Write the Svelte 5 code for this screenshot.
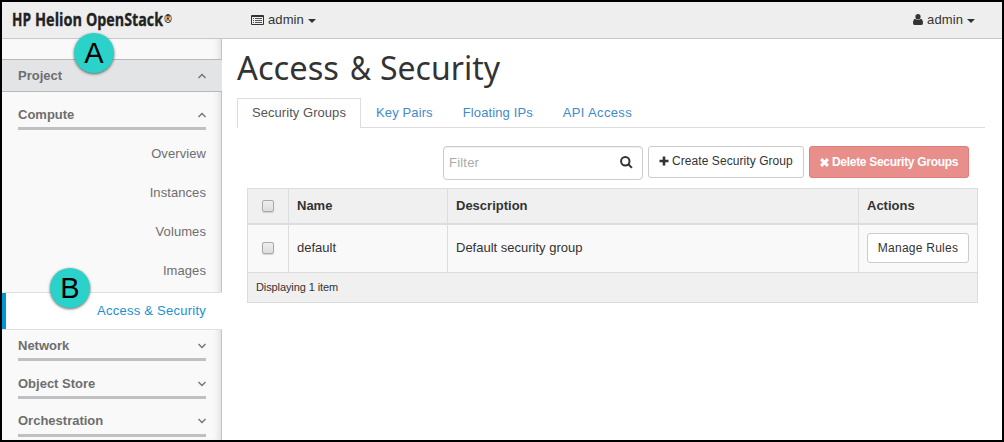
<script>
  const links = ['Overview', 'Instances', 'Volumes', 'Images'];
  const groups = ['Network', 'Object Store', 'Orchestration'];
  const tabs = ['Security Groups', 'Key Pairs', 'Floating IPs', 'API Access'];
</script>

{#snippet chevron(up)}
  <svg class="chev" width="8" height="6" viewBox="0 0 8 6"><path d={up ? 'M.5 5 4 1.5 7.5 5' : 'M.5 1 4 4.5 7.5 1'} fill="none" stroke="#707070" stroke-width="1.3" /></svg>
{/snippet}

<div class="frame">
  <header>
    <svg class="logo" width="166" height="30" viewBox="0 0 166 30"><text y="20"><tspan x="0" textLength="19" lengthAdjust="spacingAndGlyphs">HP</tspan><tspan x="23" textLength="47" lengthAdjust="spacingAndGlyphs">Helion</tspan><tspan x="74" textLength="77" lengthAdjust="spacingAndGlyphs">OpenStack</tspan><tspan class="reg" x="152" y="17" textLength="8" lengthAdjust="spacingAndGlyphs">®</tspan></text></svg>
    <div class="menu">
      <svg width="13" height="10" viewBox="0 0 13 10"><path fill="#333" d="M1 0h11q1 0 1 1v8q0 1-1 1H1q-1 0-1-1V1q0-1 1-1z" /><path fill="#eee" d="M1 2h11v7H1z" /><path stroke="#555" d="M2 3.5h1M4 3.5h7M2 5.5h1M4 5.5h7M2 7.5h1M4 7.5h7" /></svg>
      <span>admin</span><i class="caret"></i>
    </div>
    <div class="menu user">
      <svg width="10" height="11" viewBox="0 0 10 11"><ellipse cx="5" cy="2.8" rx="2.6" ry="2.8" fill="#333" /><path fill="#333" d="M2.1 4.8Q5 7.4 7.9 4.8 10 5.5 10 9q0 2-1.5 2h-7Q0 11 0 9q0-3.5 2.1-4.2z" /></svg>
      <span>admin</span><i class="caret"></i>
    </div>
  </header>
  <div class="body">
    <nav>
      <div class="project"><span>Project</span>{@render chevron(true)}</div>
      <div class="group compute"><span>Compute</span>{@render chevron(true)}</div>
      {#each links as l}<a class="link">{l}</a>{/each}
      <a class="link active">Access &amp; Security</a>
      {#each groups as g}<div class="group"><span>{g}</span>{@render chevron(false)}</div>{/each}
    </nav>
    <main>
      <h1><svg width="280" height="51" viewBox="0 0 280 51"><text y="33"><tspan x="0" textLength="102" lengthAdjust="spacingAndGlyphs">Access</tspan> <tspan x="113" textLength="21" lengthAdjust="spacingAndGlyphs">&amp;</tspan> <tspan x="143" textLength="120" lengthAdjust="spacingAndGlyphs">Security</tspan></text></svg></h1>
      <div class="tabs">
        {#each tabs as t, i}<a class:current={i === 0}>{t}</a>{/each}
      </div>
      <div class="tools">
        <div class="filter"><span>Filter</span><svg width="13" height="13" viewBox="0 0 13 13" fill="none" stroke="#333" stroke-width="2"><circle cx="5.3" cy="5.3" r="4.2" /><path d="m8.3 8.3 3.6 3.6" /></svg></div>
        <div class="btn create"><svg width="10" height="10" viewBox="0 0 10 10"><path d="M5 .5v9M.5 5h9" stroke="#333" stroke-width="2.6" /></svg><span>Create Security Group</span></div>
        <div class="btn delete"><svg width="9" height="9" viewBox="0 0 9 9"><path d="m1.1 1.1 6.8 6.8m0-6.8L1.1 7.9" stroke="#fff" stroke-width="2.9" /></svg><span>Delete Security Groups</span></div>
      </div>
      <div class="table">
        <div class="row head"><div class="check"><i></i></div><div>Name</div><div>Description</div><div>Actions</div></div>
        <div class="row item"><div class="check"><i></i></div><div>default</div><div>Default security group</div><div><span class="btn manage">Manage Rules</span></div></div>
        <div class="foot">Displaying 1 item</div>
      </div>
    </main>
  </div>
  <div class="badge a">A</div>
  <div class="badge b">B</div>
</div>

<style>
  .frame, .frame * { box-sizing: border-box; }
  .frame { position: relative; width: 1004px; height: 442px; border: 2px solid #000; background: #fff; overflow: hidden; font: 13px/18px "Liberation Sans", Arial, sans-serif; color: #333; }
  svg { display: block; flex: none; overflow: visible; }
  header { display: flex; height: 37px; background: #eee; border-bottom: 1px solid #c8c8c8; }
  .logo { margin: 4px 0 0 10px; }
  .logo text { font: 700 17px "Open Sans", sans-serif; fill: #222; stroke: #222; stroke-width: .3px; }
  .logo .reg { font-size: 13px; stroke: none; }
  .menu { display: flex; align-items: center; height: 35px; margin-left: 73px; }
  .menu span { margin-left: 4px; letter-spacing: .1px; }
  .menu.user { margin: 0 27px 0 auto; }
  .caret { margin: 3px 0 0 4px; border: 4px solid transparent; border-top-color: #333; border-bottom: 0; }
  .body { display: flex; height: 401px; }
  nav { width: 220px; padding-top: 20px; background: #f9f9f9; border-right: 1px solid #c4c4c4; box-shadow: inset -6px 0 6px -4px #ddd; color: #6e6e6e; flex: none; }
  .project { display: flex; align-items: center; justify-content: space-between; width: 220px; height: 33px; padding: 0 16px; background: #e2e4e6; border: solid #b8b8b8; border-width: 1px 0; font-weight: 700; }
  .group { display: flex; justify-content: space-between; align-items: center; height: 29px; margin: 0 15px 9px 16px; padding-top: 1px; border-bottom: 3px solid #bfc0c1; font-weight: 700; }
  .group:last-child { padding-top: 0; padding-bottom: 1px; }
  .compute { margin-top: 9px; margin-bottom: 4px; }
  .link { display: flex; align-items: center; justify-content: flex-end; height: 39px; padding: 0 15px 0 0; letter-spacing: .08px; }
  .active { width: 220px; height: 38px; margin-top: 2px; padding: 0 16px 0 0; background: #fff; border: solid #e0e0e0; border-width: 1px 0; box-shadow: inset 4px 0 #0096d6; color: #1a8fd2; letter-spacing: .25px; }
  .active + .group { margin-top: 2px; }
  main { flex: 1; padding: 8px 15px 0 15px; }
  h1 { margin: 0; height: 51px; }
  h1 text { font: 400 33.5px "Noto Sans", sans-serif; fill: #333; }
  .tabs { display: flex; height: 30px; width: 748px; border-bottom: 1px solid #ddd; color: #428bca; }
  .tabs a { padding: 6px 15px 0; height: 30px; letter-spacing: .12px; }
  .tabs .current { width: 124px; padding: 5px 0 0 14px; border: 1px solid #ddd; border-bottom: 0; background: #fff; color: #555; letter-spacing: .05px; }
  .tabs a:last-child { letter-spacing: .35px; }
  .tools { display: flex; justify-content: flex-end; gap: 5px; width: 732px; height: 34px; margin-top: 18px; }
  .filter { display: flex; justify-content: space-between; align-items: center; width: 200px; height: 34px; padding: 0 9px 1px 5px; border: 1px solid #ccc; border-radius: 4px; box-shadow: inset 0 1px 1px #0001; color: #aaa; letter-spacing: .2px; }
  .filter svg { margin-top: -1px; }
  .btn { display: flex; align-items: center; height: 32px; border: 1px solid #ccc; border-radius: 3px; background: #fff; }
  .create { width: 156px; padding: 0 0 2px 10px; gap: 3px; font-size: 12px; letter-spacing: .07px; white-space: nowrap; }
  .delete { width: 160px; padding-left: 10px; gap: 3px; background: #e88f8c; border-color: #e27c79; color: #fff; font-weight: 700; font-size: 12px; letter-spacing: -.3px; white-space: nowrap; }
  .table { width: 731px; height: 115px; margin: 8px 0 0 10px; border: 1px solid #ddd; }
  .row { display: grid; grid-template-columns: 40px 159px 411px 119px; height: 36px; border-bottom: 2px solid #ddd; background: #f0f0f0; }
  .row > div { display: flex; align-items: center; padding-left: 8px; border-left: 1px solid #ddd; }
  .row > div:first-child { border: 0; padding-left: 14px; }
  .head { font-weight: 700; }
  .item { height: 48px; padding-bottom: 1px; border-bottom-width: 1px; background: linear-gradient(#ddd, #ddd) 40px 100% / 1px 1px no-repeat, linear-gradient(#ddd, #ddd) 199px 100% / 1px 1px no-repeat, linear-gradient(#ddd, #ddd) 610px 100% / 1px 1px no-repeat, #f9f9f9; }
  .check i { width: 12px; height: 12px; border: 1px solid #aaa; border-radius: 2px; background: linear-gradient(#eee, #ddd); box-shadow: 0 1px 1px #0002; }
  .manage { justify-content: center; width: 102px; height: 30px; font-size: 12px; letter-spacing: .25px; }
  .foot { height: 29px; padding: 5px 8px; background: #f0f0f0; font-size: 11px; letter-spacing: -.1px; }
  .badge { position: absolute; width: 40px; height: 40px; border-radius: 50%; background: #2ad2c9; box-shadow: 0 1px 3px #0009; color: #000; font: 29px/40px "Liberation Sans", Arial, sans-serif; text-align: center; }
  .a { left: 72px; top: 31px; }
  .b { left: 48px; top: 266px; }
</style>
